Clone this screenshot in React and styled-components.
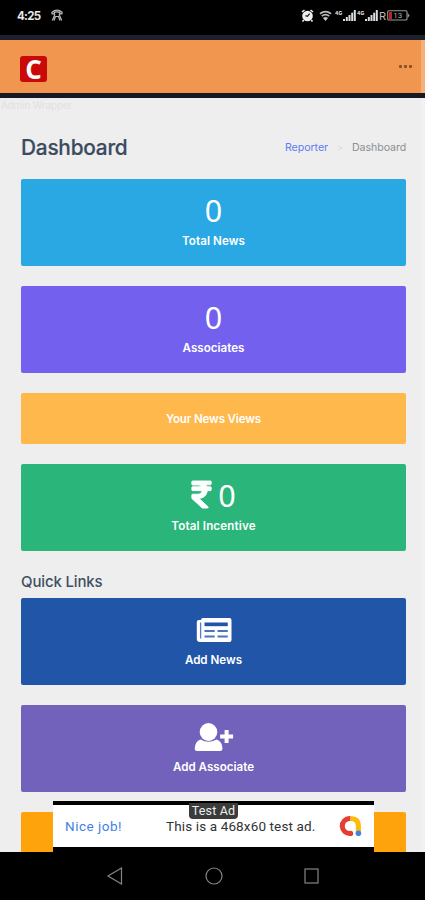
import React from "react";
import styled, { createGlobalStyle } from "styled-components";
import { FaRupeeSign } from "react-icons/fa";

const GlobalStyle = createGlobalStyle`
  * { box-sizing: border-box; }
  body { margin: 0; background: #000; }
`;

const Phone = styled.div`
  width: 425px;
  height: 900px;
  display: flex;
  flex-direction: column;
  overflow: hidden;
  background: #000;
  font-family: Inter, "Liberation Sans", sans-serif;
`;

const StatusBar = styled.header`
  height: 35px;
  flex: none;
  display: flex;
  align-items: center;
  justify-content: space-between;
  padding: 0 15px 4px 17px;
  color: #e8e8e8;
`;

const StatusGroup = styled.div`
  display: flex;
  align-items: center;
  gap: ${(p) => p.$gap || 0}px;
`;

const Clock = styled.span`
  width: 23px;
  font-size: 11.5px;
  font-weight: 700;
  letter-spacing: -0.7px;
  white-space: nowrap;
`;

const TopBar = styled.div`
  height: 63px;
  flex: none;
  display: flex;
  align-items: center;
  justify-content: space-between;
  padding: 2px 13px 0 20px;
  background: linear-gradient(90deg, #f0964f 421px, #f5b07a 421px);
  border-top: 5px solid #1c212d;
  border-bottom: 5px solid #151925;
`;

const Logo = styled.div`
  width: 27px;
  height: 26px;
  margin-top: 2px;
  border-radius: 3px;
  display: flex;
  align-items: center;
  justify-content: center;
  background: #cc0909;
  color: #fff;
  font: 700 26px/26px "Open Sans", sans-serif;
`;

const MoreDots = styled.div`
  display: flex;
  gap: 2px;
  margin-top: -3px;
`;

const Dot = styled.i`
  width: 3px;
  height: 3px;
  border-radius: 1px;
  background: #8b4f27;
`;

const Content = styled.main`
  height: 754px;
  flex: none;
  position: relative;
  overflow: hidden;
  padding: 0 15px 0 21px;
  background: #eeeeee;
  border-right: 4px solid #f1f0f2;
`;

const Ghost = styled.div`
  height: 14px;
  margin-left: -20px;
  color: #e1e1e1;
  font-size: 10px;
  line-height: 14px;
  letter-spacing: -0.2px;
`;

const PageHead = styled.div`
  height: 67px;
  display: flex;
  align-items: center;
  justify-content: space-between;
`;

const Title = styled.h1`
  margin: 4px 0 0;
  color: #3a4b60;
  font-size: 20.8px;
  line-height: 28px;
  font-weight: 500;
  letter-spacing: -0.22px;
  -webkit-text-stroke: 0.2px #3a4b60;
`;

const Crumbs = styled.nav`
  display: flex;
  align-items: center;
  margin-top: 3px;
  font-size: 10.6px;
  letter-spacing: -0.05px;
  color: #8b8e93;
`;

const CrumbLink = styled.span`
  width: 43px;
  color: #5f7ef0;
  white-space: nowrap;
`;

const CrumbArrow = styled.span`
  width: 24px;
  color: #dcdde0;
  text-align: center;
`;

const CrumbHere = styled.span`
  width: 54px;
  white-space: nowrap;
`;

const Card = styled.section`
  height: ${(p) => p.$h || 87}px;
  margin-bottom: 20px;
  border-radius: 2px;
  display: flex;
  flex-direction: column;
  align-items: center;
  padding-top: ${(p) => (p.$h ? 17 : 13)}px;
  background: ${(p) => p.$color};
  color: #fff;
`;

const Figure = styled.div`
  height: 37px;
  display: flex;
  align-items: center;
  line-height: 37px;
`;

const Rupee = styled(FaRupeeSign)`
  width: 21px;
  height: 31px;
  margin: -2px 6px 0 0;
  stroke: currentColor;
  stroke-width: 14px;
`;

const Numeral = styled.span`
  font-family: "Noto Sans", sans-serif;
  font-size: 30.5px;
  font-weight: 400;
`;

const Label = styled.div`
  margin-top: ${(p) => (p.$flush ? 0 : 3)}px;
  font-size: 11.6px;
  line-height: 18px;
  font-weight: 600;
  letter-spacing: ${(p) => p.$track ?? 0}px;
  white-space: nowrap;
`;

const SectionTitle = styled.h2`
  height: 27px;
  margin: 0;
  color: #3f4f63;
  font-size: 15px;
  line-height: 22px;
  font-weight: 500;
  letter-spacing: -0.15px;
`;

const AdBanner = styled.aside`
  position: absolute;
  left: 53px;
  bottom: 0;
  width: 321px;
  height: 51px;
  display: flex;
  align-items: center;
  padding: 0 12px;
  background: #fff;
  border-top: 4px solid #000;
  border-bottom: 5px solid #000;
  font-family: Roboto, sans-serif;
  font-size: 13.5px;
`;

const AdLead = styled.span`
  width: 101px;
  color: #3f7fe8;
  letter-spacing: 0.5px;
`;

const AdText = styled.span`
  flex: 1;
  color: #333;
  letter-spacing: 0.13px;
  white-space: nowrap;
`;

const AdTag = styled.span`
  position: absolute;
  left: 136px;
  top: -2px;
  width: 49px;
  height: 16px;
  border-radius: 0 0 4px 4px;
  background: #3b3b3b;
  color: #eee;
  font-size: 12.5px;
  line-height: 16px;
  text-align: center;
  letter-spacing: 0.15px;
`;

const NavBar = styled.footer`
  height: 48px;
  flex: none;
  display: flex;
  align-items: center;
  justify-content: space-between;
  padding: 0 106px 0 106px;
`;

const CallIcon = () => (
  <svg width="12" height="13" viewBox="0 0 12 13" fill="none" stroke="#bcbcbc" strokeWidth="1.2">
    <path d="M1 4.7V3.3Q6-1.2 11 3.3V4.7L8.7 5V3.4Q6 2.4 3.3 3.4V5Z" />
    <path d="M4 5.2 1.3 11.5M8 5.2l2.7 6.3M4.5 7.5h3L9 11.5M4.5 7.5 3 11.5" />
  </svg>
);

const AlarmIcon = () => (
  <svg width="13" height="13" viewBox="0 0 13 13">
    <circle cx="6.5" cy="7" r="5.3" fill="#eee" />
    <path d="M1 3 3.5 1M12 3 9.5 1M2.7 11 1.5 12.5M10.3 11l1.2 1.5" stroke="#eee" strokeWidth="1.6" />
    <path d="M8.7 4.7 6.4 7.4 4.5 6.6" fill="none" stroke="#111" strokeWidth="1.2" />
  </svg>
);

const WifiIcon = () => (
  <svg width="13" height="12" viewBox="0 0 13 12" fill="none" stroke="#bbb">
    <path d="M1 3.7Q6.5-.5 12 3.7" strokeWidth="1.8" />
    <path d="M2.8 6Q6.5 3.2 10.2 6" strokeWidth="1.6" />
    <path d="M4.3 7.9Q6.5 6.4 8.7 7.9L6.5 10.7Z" fill="#ccc" strokeWidth=".6" />
  </svg>
);

const NetTag = styled.span`
  align-self: flex-start;
  width: 9px;
  padding-left: 1px;
  font-size: 5px;
  font-weight: 700;
  line-height: 6px;
`;

const SignalIcon = () => (
  <svg width="13" height="12" viewBox="0 0 13 12" fill="#ddd">
    <rect x="0" y="9" width="2" height="2" />
    <rect x="2.8" y="7" width="2" height="4" />
    <rect x="5.5" y="5" width="2" height="6" />
    <rect x="8.2" y="2.7" width="2" height="8.3" />
    <rect x="10.8" y="0" width="2" height="11" />
  </svg>
);

const Roaming = styled.span`
  width: 9px;
  padding-left: 1px;
  color: #bbb;
  font-size: 11px;
  line-height: 12px;
`;

const BatteryIcon = () => (
  <svg width="23" height="11" viewBox="0 0 23 11">
    <rect x=".7" y=".7" width="19.3" height="9.3" rx="1" fill="none" stroke="#999" strokeWidth="1.1" />
    <path d="M20.7 3v5L22.6 5.5Z" fill="#999" />
    <rect x="2" y="2" width="3" height="7" fill="#b8261c" />
    <text x="6.2" y="8.3" fontFamily="Roboto, sans-serif" fontSize="8" fill="#aaa">13</text>
  </svg>
);

const NewspaperIcon = ({ cut }) => (
  <svg width="36" height="26" viewBox="0 0 36 26">
    <path d="M7 1h26.5a2 2 0 0 1 2 2v20a2 2 0 0 1-2 2H4a3.2 3.2 0 0 1-3.2-3.2V5a2 2 0 0 1 2-2H5V3a2 2 0 0 1 2-2Z" fill="#fff" />
    <path d="M4.6 5.5v16" stroke={cut} strokeWidth="1.3" opacity=".75" />
    <path d="M8.5 5.5h23.3v3.7H8.5Z" fill={cut} />
    <path d="M8.5 14h10.2M21.5 14h10.3M8.5 19.4h10.2M21.5 19.4h10.3" stroke={cut} strokeWidth="2" opacity=".8" />
  </svg>
);

const UserPlusIcon = () => (
  <svg width="40" height="30" viewBox="0 0 40 30" fill="#fff">
    <ellipse cx="14.5" cy="10" rx="8.8" ry="9" />
    <path d="M6.5 17.5Q14.5 22 22.5 17.5Q28.3 19.5 28.5 26.5 28.4 29 26 29H3.2Q.7 29 .7 26.5 1 19.5 6.5 17.5Z" />
    <path d="M32.6 8v13M26.1 14.5h13" stroke="#fff" strokeWidth="4" />
  </svg>
);

const AdMobLogo = () => (
  <svg width="23" height="23" viewBox="0 0 23 23" fill="none" strokeWidth="5">
    <path d="M11.5 3.5H10.5a7.3 7.3 0 0 0 .5 15" stroke="#e63d32" />
    <circle cx="11.5" cy="18.4" r="2.7" fill="#e63d32" />
    <path d="M11.5 3.5C16.5 3.5 19.4 6 19.4 11V17" stroke="#fbbc09" />
    <circle cx="19.4" cy="18.3" r="2.8" fill="#4285db" />
  </svg>
);

const StatCard = ({ color, value, label, rupee, track }) => (
  <Card $color={color}>
    <Figure>
      {rupee && <Rupee />}
      <Numeral>{value}</Numeral>
    </Figure>
    <Label $track={track}>{label}</Label>
  </Card>
);

const LinkCard = ({ color, icon: Icon, label }) => (
  <Card $color={color}>
    <Figure><Icon cut={color} /></Figure>
    <Label>{label}</Label>
  </Card>
);

export default function App() {
  return (
    <Phone>
      <GlobalStyle />
      <StatusBar>
        <StatusGroup $gap={11}>
          <Clock>4:25</Clock>
          <CallIcon />
        </StatusGroup>
        <StatusGroup $gap={2}>
          <StatusGroup $gap={5}>
            <AlarmIcon />
            <WifiIcon />
          </StatusGroup>
          <StatusGroup>
            <NetTag>4G</NetTag>
            <SignalIcon />
            <NetTag>4G</NetTag>
            <SignalIcon />
            <Roaming>R</Roaming>
            <BatteryIcon />
          </StatusGroup>
        </StatusGroup>
      </StatusBar>
      <TopBar>
        <Logo>C</Logo>
        <MoreDots><Dot /><Dot /><Dot /></MoreDots>
      </TopBar>
      <Content>
        <Ghost>Admin Wrapper</Ghost>
        <PageHead>
          <Title>Dashboard</Title>
          <Crumbs>
            <CrumbLink>Reporter</CrumbLink>
            <CrumbArrow>&gt;</CrumbArrow>
            <CrumbHere>Dashboard</CrumbHere>
          </Crumbs>
        </PageHead>
        <StatCard color="#29a8e4" value="0" label="Total News" track={0.1} />
        <StatCard color="#7460ee" value="0" label="Associates" />
        <Card $color="#ffb84b" $h={51}>
          <Label $flush $track={-0.17}>Your News Views</Label>
        </Card>
        <StatCard color="#2ab67b" value="0" label="Total Incentive" track={0.15} rupee />
        <SectionTitle>Quick Links</SectionTitle>
        <LinkCard color="#2055a8" icon={NewspaperIcon} label="Add News" />
        <LinkCard color="#7362bc" icon={UserPlusIcon} label="Add Associate" />
        <Card $color="#ffa30d" />
        <AdBanner>
          <AdLead>Nice job!</AdLead>
          <AdText>This is a 468x60 test ad.</AdText>
          <AdMobLogo />
          <AdTag>Test Ad</AdTag>
        </AdBanner>
      </Content>
      <NavBar>
        <svg width="17" height="18" viewBox="0 0 17 18" fill="none" stroke="#858585" strokeWidth="1.2">
          <path d="M15.5 1v16L2 9Z" />
        </svg>
        <svg width="18" height="18" viewBox="0 0 18 18" fill="none" stroke="#858585" strokeWidth="1.2">
          <circle cx="9" cy="9" r="8" />
        </svg>
        <svg width="15" height="16" viewBox="0 0 15 16" fill="none" stroke="#858585" strokeWidth="1.2">
          <rect x="1" y="1" width="13" height="14" />
        </svg>
      </NavBar>
    </Phone>
  );
}
